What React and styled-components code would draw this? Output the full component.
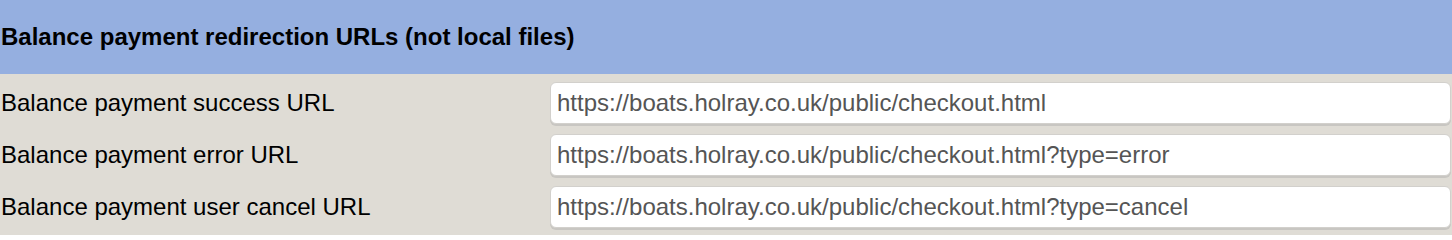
import React from 'react';
import styled, { createGlobalStyle } from 'styled-components';

const GlobalStyle = createGlobalStyle`
  html, body {
    margin: 0;
    padding: 0;
    background: #ffffff;
    font-family: "Liberation Sans", Arial, sans-serif;
  }
`;

const Panel = styled.section`
  width: 1452px;
`;

const Header = styled.div`
  height: 74px;
  display: flex;
  align-items: center;
  padding-left: 1px;
  background: #95afe0;
  color: #000;
  font-size: 24px;
  font-weight: bold;
`;

const Body = styled.div`
  background: #dfdcd5;
  padding: 3px 0 2px;
`;

const Row = styled.div`
  display: grid;
  grid-template-columns: 550px 1fr;
  align-items: center;
  height: 52px;
`;

const Label = styled.label`
  padding-left: 1px;
  font-size: 24px;
  color: #000;
`;

const UrlInput = styled.input`
  box-sizing: border-box;
  width: 901px;
  height: 42px;
  margin: 0;
  padding: 0 6px;
  border: 1px solid #d2d0cc;
  border-radius: 6px;
  background: #fff;
  box-shadow: 0 2px 0 #c8c6c2;
  font-family: "Liberation Sans", Arial, sans-serif;
  font-size: 24px;
  color: #555;
  outline: none;
`;

const fields = [
  { id: 'success', label: 'Balance payment success URL', value: 'https://boats.holray.co.uk/public/checkout.html' },
  { id: 'error', label: 'Balance payment error URL', value: 'https://boats.holray.co.uk/public/checkout.html?type=error' },
  { id: 'cancel', label: 'Balance payment user cancel URL', value: 'https://boats.holray.co.uk/public/checkout.html?type=cancel' }
];

const App = () => (
  <>
    <GlobalStyle />
    <Panel>
      <Header>Balance payment redirection URLs (not local files)</Header>
      <Body>
        {fields.map(f => (
          <Row key={f.id}>
            <Label htmlFor={f.id}>{f.label}</Label>
            <UrlInput id={f.id} type="text" defaultValue={f.value} />
          </Row>
        ))}
      </Body>
    </Panel>
  </>
);

export default App;
